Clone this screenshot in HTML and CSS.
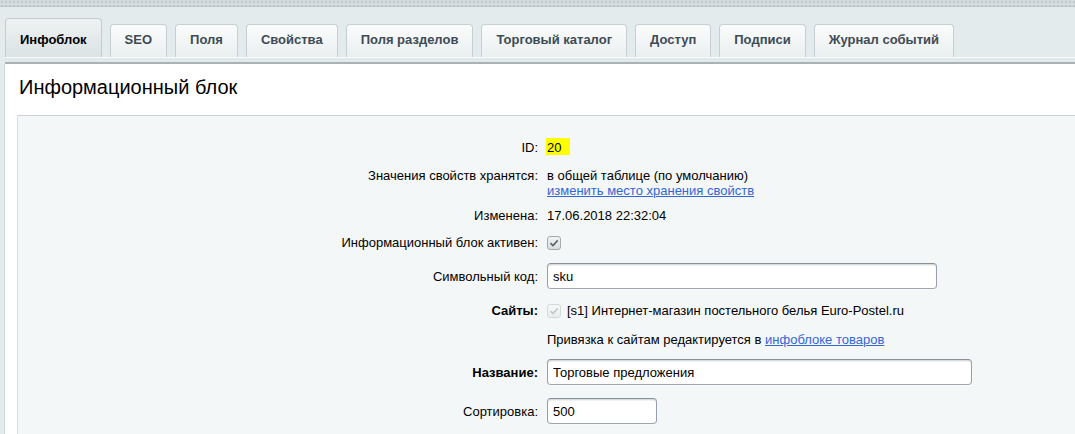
FILE: index.html
```html
<!DOCTYPE html>
<html lang="ru">
<head>
<meta charset="utf-8">
<title>Информационный блок</title>
<link rel="stylesheet" href="styles.css">
</head>
<body>
<div class="topbar"></div>
<div class="page">
  <div class="tabs">
    <div class="tab active">Инфоблок</div>
    <div class="tab">SEO</div>
    <div class="tab">Поля</div>
    <div class="tab">Свойства</div>
    <div class="tab">Поля разделов</div>
    <div class="tab">Торговый каталог</div>
    <div class="tab">Доступ</div>
    <div class="tab">Подписи</div>
    <div class="tab">Журнал событий</div>
  </div>
  <div class="strip"></div>
  <div class="panel">
    <h1 class="title">Информационный блок</h1>
    <div class="box">
      <div class="form">
        <div class="row">
          <div class="label">ID:</div>
          <div class="value"><span class="mark">20</span></div>
        </div>
        <div class="row row-top">
          <div class="label">Значения свойств хранятся:</div>
          <div class="value">в общей таблице (по умолчанию)<br><a href="#" class="link">изменить место хранения свойств</a></div>
        </div>
        <div class="row row-tight">
          <div class="label">Изменена:</div>
          <div class="value">17.06.2018 22:32:04</div>
        </div>
        <div class="row row-check">
          <div class="label">Информационный блок активен:</div>
          <div class="value"><span class="check"><svg width="10" height="10" viewBox="0 0 10 10"><polyline points="1.5,5.2 4,7.6 8.7,2.4" fill="none" stroke="#5b6266" stroke-width="1.6"/></svg></span></div>
        </div>
        <div class="row">
          <div class="label">Символьный код:</div>
          <div class="value"><input class="field field-md" type="text" value="sku"></div>
        </div>
        <div class="row row-sites">
          <div class="label bold">Сайты:</div>
          <div class="value site"><span class="check disabled"><svg width="10" height="10" viewBox="0 0 10 10"><polyline points="1.5,5.2 4,7.6 8.7,2.4" fill="none" stroke="#c3c9cb" stroke-width="1.6"/></svg></span>[s1] Интернет-магазин постельного белья Euro-Postel.ru</div>
        </div>
        <div class="row row-note">
          <div class="label"></div>
          <div class="value">Привязка к сайтам редактируется в <a href="#" class="link">инфоблоке товаров</a></div>
        </div>
        <div class="row row-name">
          <div class="label bold">Название:</div>
          <div class="value"><input class="field field-lg" type="text" value="Торговые предложения"></div>
        </div>
        <div class="row">
          <div class="label">Сортировка:</div>
          <div class="value"><input class="field field-sm" type="text" value="500"></div>
        </div>
      </div>
    </div>
  </div>
</div>
</body>
</html>
```
FILE: styles.css
```css
html, body {
  margin: 0;
  padding: 0;
  height: 100%;
  overflow: hidden;
}
body {
  background: #e4ebed;
  font-family: "Liberation Sans", Arial, sans-serif;
  font-size: 13px;
  color: #000;
}
.topbar {
  height: 6px;
  border-bottom: 1px solid #bcc6ca;
  background-color: #d3dbdf;
  background-image: radial-gradient(circle, #bfc9cd 0.8px, transparent 1px);
  background-size: 4px 4px;
}
.page {
  padding-left: 4px;
  display: flex;
  flex-direction: column;
  height: calc(100% - 7px);
}
.tabs {
  height: 50px;
  flex: none;
  display: flex;
  align-items: flex-end;
  gap: 8px;
  padding-left: 1px;
}
.tab {
  height: 33px;
  box-sizing: border-box;
  padding: 0 14px 3px;
  display: flex;
  align-items: center;
  border: 1px solid #c6cfd2;
  border-bottom: none;
  border-radius: 4px 4px 0 0;
  background: linear-gradient(#fbfcfc, #eaeff0);
  font-weight: bold;
  color: #3e4b55;
  white-space: nowrap;
}
.tab.active {
  height: 39px;
  padding: 3px 14px 0 14px;
  background: linear-gradient(#eef2f3, #dbe3e5);
  border-color: #c3cccf;
  color: #000;
}
.strip {
  height: 4px;
  flex: none;
  margin-left: 1px;
  border-top: 1px solid #fbfcfc;
  border-bottom: 2px solid #a9b2b5;
  background: #e2e9eb;
}
.panel {
  flex: 1;
  min-height: 0;
  display: flex;
  flex-direction: column;
  background: #fff;
  border-left: 1px solid #cfd7da;
  padding: 11px 0 0 12px;
}
.title {
  margin: 0 0 16px 0;
  padding-left: 2px;
  font-size: 20px;
  line-height: 24px;
  font-weight: normal;
  color: #000;
}
.box {
  flex: 1;
  min-height: 0;
  overflow: hidden;
  background: #f4f7f8;
  border-top: 1px solid #c9d1d4;
  border-left: 1px solid #d8dfe1;
  padding-top: 24px;
}
.form {
  display: flex;
  flex-direction: column;
  gap: 13px;
}
.row {
  display: grid;
  grid-template-columns: 520px 1fr;
  column-gap: 9px;
  align-items: center;
  line-height: 15px;
}
.row-top { align-items: start; }
.row-tight { margin-top: -3px; }
.row-check { line-height: 14px; }
.row-sites { margin-top: 1px; }
.row-note { margin-top: 1px; }
.row-name { margin-top: -1px; }
.label {
  text-align: right;
}
.bold { font-weight: bold; }
.value {
  display: flex;
  flex-direction: column;
  align-items: flex-start;
}
.value.site {
  flex-direction: row;
  align-items: center;
}
.value .link { display: block; }
.row-note .value { display: block; }
.row-note .value .link { display: inline; }
.mark {
  display: inline-block;
  background: #ffff00;
  padding: 2px 9px 0 1px;
  margin: -2px 0 0 -1px;
}
.link {
  color: #3366d6;
  text-decoration: underline;
}
.check {
  width: 14px;
  height: 14px;
  box-sizing: border-box;
  border: 1px solid #a2aaad;
  border-radius: 3px;
  background: linear-gradient(#f1f3f4, #d9dfe1);
  display: flex;
  align-items: center;
  justify-content: center;
}
.check.disabled {
  border-color: #d3d9db;
  background: linear-gradient(#f6f7f8, #eaeef0);
  margin-right: 6px;
}
.field {
  height: 26px;
  box-sizing: border-box;
  border: 1px solid;
  border-color: #87919c #959ea9 #9ea7b1 #959ea9;
  border-radius: 4px;
  box-shadow: 0 1px 0 0 rgba(255,255,255,.3), inset 0 2px 2px -1px rgba(180,188,191,.7);
  background: #fff;
  padding: 0 5px;
  font-family: "Liberation Sans", Arial, sans-serif;
  font-size: 13px;
  color: #000;
  outline: none;
  margin: 0;
}
.field-md { width: 390px; }
.field-lg { width: 425px; }
.field-sm { width: 110px; }
```
